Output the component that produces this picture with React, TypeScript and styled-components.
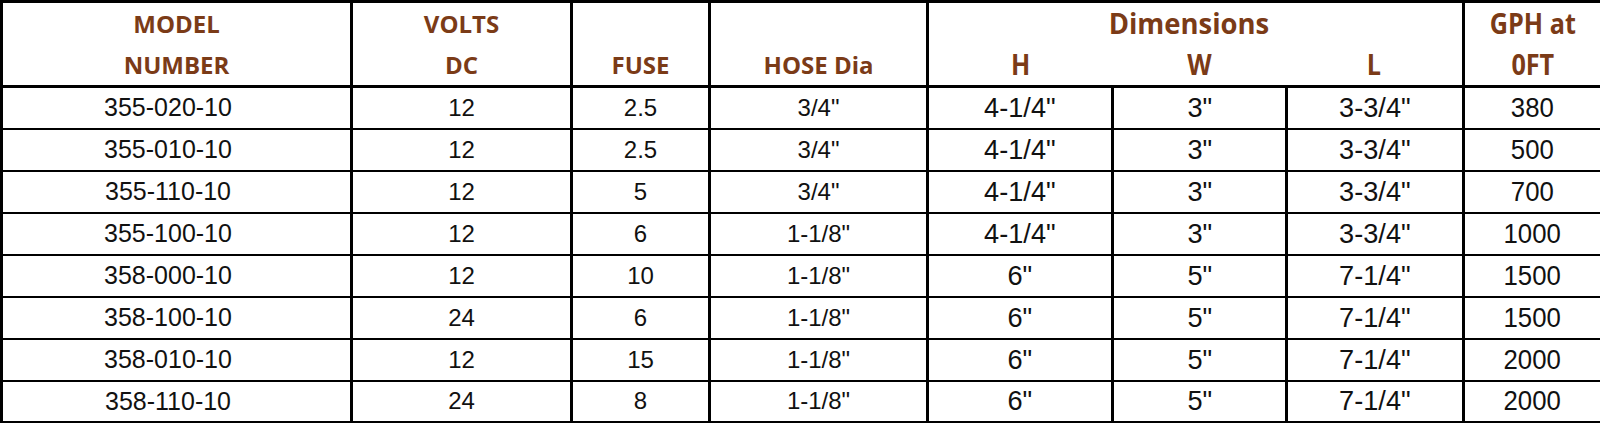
import React from "react";
import styled, { createGlobalStyle } from "styled-components";

const GlobalStyle = createGlobalStyle`
  html, body {
    margin: 0;
    padding: 0;
    background: #ffffff;
  }
`;

const Table = styled.table`
  width: 1600px;
  border-collapse: collapse;
  table-layout: fixed;
  border: 3px solid #000;
  font-family: "Liberation Sans", Arial, sans-serif;
`;

const HeadRow = styled.tr`
  height: 42px;
`;

const Th = styled.th<{ $bottom?: boolean; $inner?: boolean; $tall?: boolean }>`
  padding: 0;
  font-family: "Open Sans", "Liberation Sans", sans-serif;
  font-weight: 700;
  font-size: ${(p) => (p.$tall ? "28px" : "24px")};
  line-height: 41px;
  color: #7b3b17;
  text-align: center;
  vertical-align: ${(p) => (p.$bottom ? "bottom" : "top")};
  border-left: ${(p) => (p.$inner ? "none" : "3px solid #000")};
  border-bottom: 3px solid #000;
`;

const Narrow = styled.span<{ $k?: number }>`
  display: inline-block;
  transform: scaleX(${(p) => p.$k ?? 0.9});
  white-space: nowrap;
`;

const BodyRow = styled.tr`
  height: 42px;
`;

const Td = styled.td<{ $size?: number; $shift?: number }>`
  padding: 0 ${(p) => p.$shift ?? 0}px 0 0;
  font-size: ${(p) => p.$size ?? 24}px;
  line-height: 1;
  color: #111;
  text-align: center;
  vertical-align: middle;
  border: 2px solid #000;
  border-left-width: 3px;
`;

const widths = [350, 220, 138, 218, 185, 174, 177, 138];

const rows = [
  ["355-020-10", "12", "2.5", "3/4\"", "4-1/4\"", "3\"", "3-3/4\"", "380"],
  ["355-010-10", "12", "2.5", "3/4\"", "4-1/4\"", "3\"", "3-3/4\"", "500"],
  ["355-110-10", "12", "5", "3/4\"", "4-1/4\"", "3\"", "3-3/4\"", "700"],
  ["355-100-10", "12", "6", "1-1/8\"", "4-1/4\"", "3\"", "3-3/4\"", "1000"],
  ["358-000-10", "12", "10", "1-1/8\"", "6\"", "5\"", "7-1/4\"", "1500"],
  ["358-100-10", "24", "6", "1-1/8\"", "6\"", "5\"", "7-1/4\"", "1500"],
  ["358-010-10", "12", "15", "1-1/8\"", "6\"", "5\"", "7-1/4\"", "2000"],
  ["358-110-10", "24", "8", "1-1/8\"", "6\"", "5\"", "7-1/4\"", "2000"],
];

const renderCell = (c: string, j: number) => {
  if (j === 0) {
    return (
      <Td key={j} $size={25} $shift={17}>
        {c}
      </Td>
    );
  }
  if (j >= 4) {
    return (
      <Td key={j} $size={28}>
        <Narrow $k={j === 7 ? 0.92 : 0.97}>{c}</Narrow>
      </Td>
    );
  }
  return <Td key={j}>{c}</Td>;
};

export default function App() {
  return (
    <>
      <GlobalStyle />
      <Table>
        <colgroup>
          {widths.map((w, i) => (
            <col key={i} style={{ width: w }} />
          ))}
        </colgroup>
        <thead>
          <HeadRow>
            <Th rowSpan={2}>
              MODEL
              <br />
              NUMBER
            </Th>
            <Th rowSpan={2}>
              VOLTS
              <br />
              DC
            </Th>
            <Th rowSpan={2} $bottom>
              FUSE
            </Th>
            <Th rowSpan={2} $bottom>
              HOSE Dia
            </Th>
            <Th colSpan={3} $tall style={{ borderBottom: "none", paddingRight: 14 }}>
              <Narrow $k={0.98}>Dimensions</Narrow>
            </Th>
            <Th rowSpan={2} $tall>
              <Narrow $k={0.9}>GPH at</Narrow>
              <br />
              <Narrow $k={0.9}>0FT</Narrow>
            </Th>
          </HeadRow>
          <HeadRow>
            <Th $bottom $tall>
              <Narrow>H</Narrow>
            </Th>
            <Th $bottom $inner $tall>
              <Narrow>W</Narrow>
            </Th>
            <Th $bottom $inner $tall>
              <Narrow>L</Narrow>
            </Th>
          </HeadRow>
        </thead>
        <tbody>
          {rows.map((r, i) => (
            <BodyRow key={i}>{r.map(renderCell)}</BodyRow>
          ))}
        </tbody>
      </Table>
    </>
  );
}
